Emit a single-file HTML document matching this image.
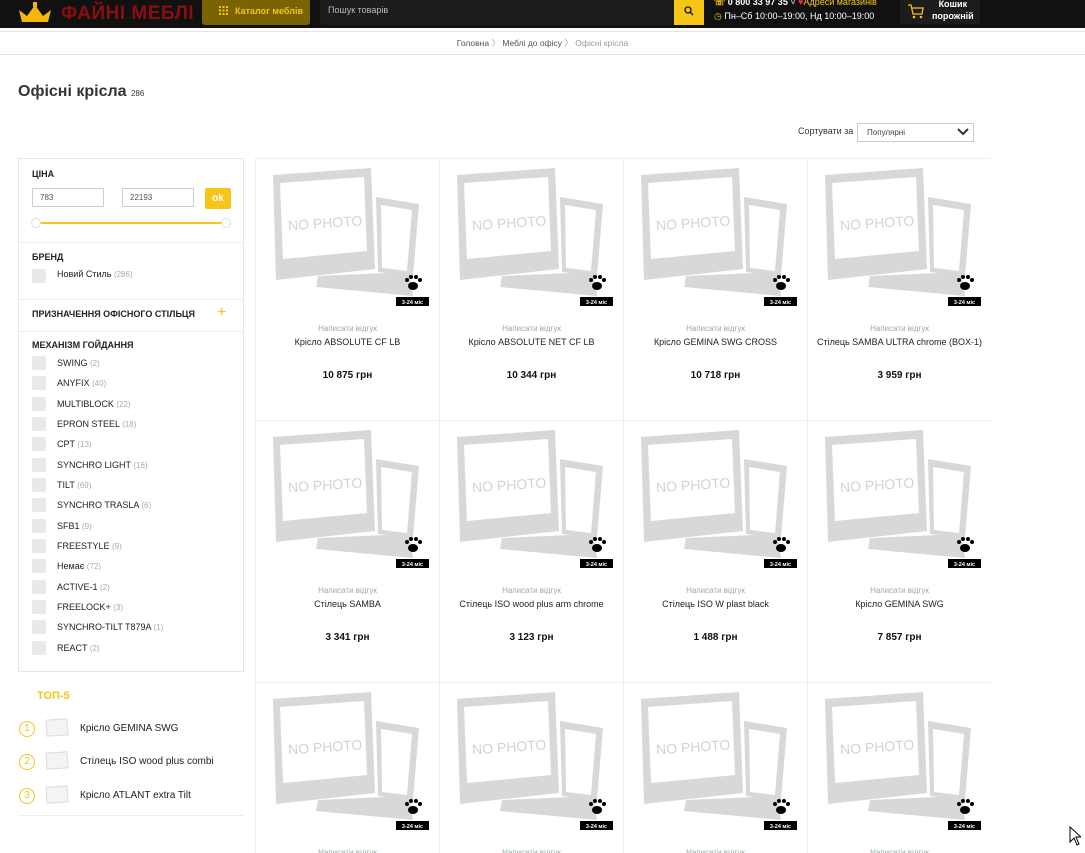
<!DOCTYPE html>
<html style="overflow:hidden;height:853px"><head><meta charset="utf-8"><style>
*{margin:0;padding:0;box-sizing:border-box}
body{width:1085px;height:853px;overflow:hidden;background:#fff;font-family:"Liberation Sans",sans-serif;color:#222;position:relative}
.a{position:absolute}
.hdr{left:0;top:0;width:1085px;height:28px;background:#111}
.card{position:absolute;width:184px;height:262px;border-right:1px solid #eee;border-bottom:1px solid #eee}
.card svg{position:absolute;left:0;top:0}
.rv{position:absolute;top:165px;width:100%;text-align:center;font-size:8px;color:#9aa}
.nm{position:absolute;top:178px;width:100%;text-align:center;font-size:9px;color:#222}
.pr{position:absolute;top:211px;width:100%;text-align:center;font-size:10px;font-weight:bold;color:#111}
.cb{position:absolute;left:13px;width:14px;height:14px;background:#e9e9eb;border-radius:2px}
.cl{position:absolute;left:38px;font-size:9px;color:#222}
.cl span{color:#aaa;font-size:8px}
.sh{position:absolute;left:13px;font-size:9px;font-weight:bold;color:#222}
.sep{position:absolute;left:0;width:226px;height:1px;background:#eee}
</style></head><body>
<div class="a hdr"></div>
<svg class="a" style="left:17px;top:2px" width="36" height="24" viewBox="0 0 36 24"><path d="M2 8 L10 14 L18 3 L26 14 L34 8 L31 20 L5 20 Z" fill="#f5b80a"/><rect x="16" y="0" width="4" height="5" fill="#f5b80a"/></svg>
<div class="a" style="left:61px;top:3px;font-size:19px;font-weight:bold;color:#8b0d12;letter-spacing:0.5px">ФАЙНІ МЕБЛІ</div>
<div class="a" style="left:202px;top:0;width:108px;height:25px;background:#7a6303;border-radius:0 0 3px 3px;color:#f5c518;font-size:9px;font-weight:bold;line-height:22px;padding-left:33px">Каталог меблів</div>
<svg class="a" style="left:219px;top:6px" width="9" height="9"><g fill="#f5c518"><rect x="0" y="0" width="2" height="2"/><rect x="3.5" y="0" width="2" height="2"/><rect x="7" y="0" width="2" height="2"/><rect x="0" y="3.5" width="2" height="2"/><rect x="3.5" y="3.5" width="2" height="2"/><rect x="7" y="3.5" width="2" height="2"/><rect x="0" y="7" width="2" height="2"/><rect x="3.5" y="7" width="2" height="2"/><rect x="7" y="7" width="2" height="2"/></g></svg>
<div class="a" style="left:320px;top:0;width:355px;height:25px;background:#1c1c1c;border-radius:0 0 0 3px;color:#bbb;font-size:9px;line-height:21px;padding-left:8px">Пошук товарів</div>
<div class="a" style="left:674px;top:0;width:30px;height:25px;background:#f5c518"></div>
<svg class="a" style="left:684px;top:6px" width="10" height="10"><circle cx="4" cy="4" r="3" fill="none" stroke="#111" stroke-width="1.3"/><line x1="6" y1="6" x2="9" y2="9" stroke="#111" stroke-width="1.3"/></svg>
<div class="a" style="left:714px;top:-3px;font-size:9px;color:#fff;font-weight:bold"><span style="color:#f5c518">☏</span> 0 800 33 97 35 <span style="color:#aaa">˅</span> <span style="color:#e33">♥</span><span style="color:#f5c518;font-weight:normal">Адреси магазинів</span></div>
<div class="a" style="left:714px;top:11px;font-size:9px;color:#fff"><span style="color:#f5c518">◷</span> Пн–Сб 10:00–19:00, Нд 10:00–19:00</div>
<div class="a" style="left:900px;top:0;width:80px;height:24px;background:#1c1c1c;border-radius:0 0 3px 3px"></div>
<svg class="a" style="left:907px;top:3px" width="18" height="16"><path d="M1 2 H4 L6 11 H15 L16 5 H5" fill="none" stroke="#f5c518" stroke-width="1.3"/><circle cx="7" cy="14" r="1.3" fill="#f5c518"/><circle cx="14" cy="14" r="1.3" fill="#f5c518"/></svg>
<div class="a" style="left:932px;top:-2px;font-size:9px;color:#fff;font-weight:bold;text-align:center;line-height:12px">Кошик<br>порожній</div>
<div class="a" style="left:0;top:31px;width:1085px;height:1px;background:#e4e4e0"></div>
<div class="a" style="left:0;top:37px;width:1085px;text-align:center;font-size:8.5px;color:#555">Головна <span style="color:#999">〉</span> Меблі до офісу <span style="color:#999">〉</span> <span style="color:#999">Офісні крісла</span></div>
<div class="a" style="left:0;top:54px;width:1085px;height:1px;background:#e4e4e0"></div>
<div class="a" style="left:18px;top:83px;font-size:16px;font-weight:bold;color:#333">Офісні крісла <span style="font-size:8px;font-weight:normal;color:#333">286</span></div>
<div class="a" style="left:798px;top:126px;font-size:9px;color:#333">Сортувати за</div>
<div class="a" style="left:857px;top:123px;width:117px;height:19px;border:1px solid #ccc;font-size:8px;color:#444;line-height:17px;padding-left:9px">Популярні</div>
<svg class="a" style="left:957px;top:128px" width="12" height="8"><path d="M1 1 L6 6 L11 1" fill="none" stroke="#333" stroke-width="2"/></svg>

<div class="a" style="left:18px;top:158px;width:226px;height:514px;border:1px solid #e6e6e6">
<div class="sh" style="top:10px">ЦІНА</div>
<div class="a" style="left:13px;top:29px;width:72px;height:19px;border:1px solid #ccd;font-size:8px;color:#555;line-height:17px;padding-left:7px">783</div>
<div class="a" style="left:103px;top:29px;width:72px;height:19px;border:1px solid #ccd;font-size:8px;color:#555;line-height:17px;padding-left:7px">22193</div>
<div class="a" style="left:186px;top:29px;width:26px;height:21px;background:#f5c518;border-radius:2px;color:#fff;font-size:10px;font-weight:bold;text-align:center;line-height:21px">ok</div>
<div class="a" style="left:18px;top:63px;width:190px;height:2px;background:#f5c518"></div>
<div class="a" style="left:12px;top:59px;width:10px;height:10px;border-radius:50%;background:#fff;border:1px solid #ddd"></div>
<div class="a" style="left:202px;top:59px;width:10px;height:10px;border-radius:50%;background:#fff;border:1px solid #ddd"></div>
<div class="sep" style="top:83px"></div>
<div class="sh" style="top:93px">БРЕНД</div>
<div class="cb" style="top:110px"></div><div class="cl" style="top:110px">Новий Стиль <span>(286)</span></div>
<div class="sep" style="top:140px"></div>
<div class="sh" style="top:150px">ПРИЗНАЧЕННЯ ОФІСНОГО СТІЛЬЦЯ</div>
<div class="a" style="left:198px;top:145px;font-size:16px;color:#f5c518">+</div>
<div class="sep" style="top:172px"></div>
<div class="sh" style="top:181px">МЕХАНІЗМ ГОЙДАННЯ</div>
<div class="cb" style="top:197px"></div><div class="cl" style="top:199px">SWING <span>(2)</span></div>
<div class="cb" style="top:217px"></div><div class="cl" style="top:219px">ANYFIX <span>(40)</span></div>
<div class="cb" style="top:238px"></div><div class="cl" style="top:240px">MULTIBLOCK <span>(22)</span></div>
<div class="cb" style="top:258px"></div><div class="cl" style="top:260px">EPRON STEEL <span>(18)</span></div>
<div class="cb" style="top:278px"></div><div class="cl" style="top:280px">CPT <span>(13)</span></div>
<div class="cb" style="top:299px"></div><div class="cl" style="top:301px">SYNCHRO LIGHT <span>(16)</span></div>
<div class="cb" style="top:319px"></div><div class="cl" style="top:321px">TILT <span>(69)</span></div>
<div class="cb" style="top:339px"></div><div class="cl" style="top:341px">SYNCHRO TRASLA <span>(6)</span></div>
<div class="cb" style="top:360px"></div><div class="cl" style="top:362px">SFB1 <span>(9)</span></div>
<div class="cb" style="top:380px"></div><div class="cl" style="top:382px">FREESTYLE <span>(9)</span></div>
<div class="cb" style="top:400px"></div><div class="cl" style="top:402px">Немає <span>(72)</span></div>
<div class="cb" style="top:421px"></div><div class="cl" style="top:423px">ACTIVE-1 <span>(2)</span></div>
<div class="cb" style="top:441px"></div><div class="cl" style="top:443px">FREELOCK+ <span>(3)</span></div>
<div class="cb" style="top:461px"></div><div class="cl" style="top:463px">SYNCHRO-TILT T879A <span>(1)</span></div>
<div class="cb" style="top:482px"></div><div class="cl" style="top:484px">REACT <span>(2)</span></div>
</div>

<div class="a" style="left:37px;top:690px;font-size:11px;font-weight:bold;color:#f5c518">ТОП-5</div>
<div class="a" style="left:19px;top:721px;width:16px;height:16px;border:1.5px solid #f5c518;border-radius:50%;color:#f5c518;font-size:10px;text-align:center;line-height:13px">1</div>
<div class="a" style="left:46px;top:719px;width:22px;height:17px;border:1px solid #ddd;background:#f4f4f4;transform:rotate(-4deg)"></div>
<div class="a" style="left:80px;top:723px;font-size:10px">Крісло GEMINA SWG</div>
<div class="a" style="left:19px;top:754px;width:16px;height:16px;border:1.5px solid #f5c518;border-radius:50%;color:#f5c518;font-size:10px;text-align:center;line-height:13px">2</div>
<div class="a" style="left:46px;top:752px;width:22px;height:17px;border:1px solid #ddd;background:#f4f4f4;transform:rotate(-4deg)"></div>
<div class="a" style="left:80px;top:756px;font-size:10px">Стілець ISO wood plus combi</div>
<div class="a" style="left:19px;top:788px;width:16px;height:16px;border:1.5px solid #f5c518;border-radius:50%;color:#f5c518;font-size:10px;text-align:center;line-height:13px">3</div>
<div class="a" style="left:46px;top:786px;width:22px;height:17px;border:1px solid #ddd;background:#f4f4f4;transform:rotate(-4deg)"></div>
<div class="a" style="left:80px;top:790px;font-size:10px">Крісло ATLANT extra Tilt</div>
<div class="a" style="left:18px;top:815px;width:226px;height:1px;background:#eee"></div>

<div class="a" style="left:255px;top:158px;width:736px;height:695px;border-top:1px solid #eee;border-left:1px solid #eee;overflow:hidden">
<div class="card" style="left:0;top:0"><svg width="184" height="160"><path d="M17 16 L115 9 L119 110 L20 121 Z" fill="#d8d8d8"/><path d="M24 24 L108 18 L111 92 L27 100 Z" fill="#fff"/><text x="32" y="69" font-size="14" fill="#d3d3d3" font-family="Liberation Sans" transform="rotate(-4 68 64)">NO PHOTO</text><path d="M120 38 L163 45 L157 117 L122 113 Z" fill="#d8d8d8"/><path d="M125 46 L156 51 L151 112 L126 109 Z" fill="#fff"/><path d="M62 117 L153 113 L157 137 L60 128 Z" fill="#d8d8d8"/><g fill="#000"><ellipse cx="157" cy="127" rx="5" ry="4"/><circle cx="151" cy="121" r="2"/><circle cx="155" cy="118" r="2"/><circle cx="160" cy="118" r="2"/><circle cx="164" cy="121" r="2"/></g><rect x="140" y="138" width="33" height="9" fill="#000"/><text x="156.5" y="145" font-size="5.5" fill="#fff" text-anchor="middle" font-family="Liberation Sans" font-weight="bold">3-24 міс</text></svg><div class="rv">Написати відгук</div><div class="nm">Крісло ABSOLUTE CF LB</div><div class="pr">10 875 грн</div></div>
<div class="card" style="left:184px;top:0"><svg width="184" height="160"><path d="M17 16 L115 9 L119 110 L20 121 Z" fill="#d8d8d8"/><path d="M24 24 L108 18 L111 92 L27 100 Z" fill="#fff"/><text x="32" y="69" font-size="14" fill="#d3d3d3" font-family="Liberation Sans" transform="rotate(-4 68 64)">NO PHOTO</text><path d="M120 38 L163 45 L157 117 L122 113 Z" fill="#d8d8d8"/><path d="M125 46 L156 51 L151 112 L126 109 Z" fill="#fff"/><path d="M62 117 L153 113 L157 137 L60 128 Z" fill="#d8d8d8"/><g fill="#000"><ellipse cx="157" cy="127" rx="5" ry="4"/><circle cx="151" cy="121" r="2"/><circle cx="155" cy="118" r="2"/><circle cx="160" cy="118" r="2"/><circle cx="164" cy="121" r="2"/></g><rect x="140" y="138" width="33" height="9" fill="#000"/><text x="156.5" y="145" font-size="5.5" fill="#fff" text-anchor="middle" font-family="Liberation Sans" font-weight="bold">3-24 міс</text></svg><div class="rv">Написати відгук</div><div class="nm">Крісло ABSOLUTE NET CF LB</div><div class="pr">10 344 грн</div></div>
<div class="card" style="left:368px;top:0"><svg width="184" height="160"><path d="M17 16 L115 9 L119 110 L20 121 Z" fill="#d8d8d8"/><path d="M24 24 L108 18 L111 92 L27 100 Z" fill="#fff"/><text x="32" y="69" font-size="14" fill="#d3d3d3" font-family="Liberation Sans" transform="rotate(-4 68 64)">NO PHOTO</text><path d="M120 38 L163 45 L157 117 L122 113 Z" fill="#d8d8d8"/><path d="M125 46 L156 51 L151 112 L126 109 Z" fill="#fff"/><path d="M62 117 L153 113 L157 137 L60 128 Z" fill="#d8d8d8"/><g fill="#000"><ellipse cx="157" cy="127" rx="5" ry="4"/><circle cx="151" cy="121" r="2"/><circle cx="155" cy="118" r="2"/><circle cx="160" cy="118" r="2"/><circle cx="164" cy="121" r="2"/></g><rect x="140" y="138" width="33" height="9" fill="#000"/><text x="156.5" y="145" font-size="5.5" fill="#fff" text-anchor="middle" font-family="Liberation Sans" font-weight="bold">3-24 міс</text></svg><div class="rv">Написати відгук</div><div class="nm">Крісло GEMINA SWG CROSS</div><div class="pr">10 718 грн</div></div>
<div class="card" style="left:552px;top:0"><svg width="184" height="160"><path d="M17 16 L115 9 L119 110 L20 121 Z" fill="#d8d8d8"/><path d="M24 24 L108 18 L111 92 L27 100 Z" fill="#fff"/><text x="32" y="69" font-size="14" fill="#d3d3d3" font-family="Liberation Sans" transform="rotate(-4 68 64)">NO PHOTO</text><path d="M120 38 L163 45 L157 117 L122 113 Z" fill="#d8d8d8"/><path d="M125 46 L156 51 L151 112 L126 109 Z" fill="#fff"/><path d="M62 117 L153 113 L157 137 L60 128 Z" fill="#d8d8d8"/><g fill="#000"><ellipse cx="157" cy="127" rx="5" ry="4"/><circle cx="151" cy="121" r="2"/><circle cx="155" cy="118" r="2"/><circle cx="160" cy="118" r="2"/><circle cx="164" cy="121" r="2"/></g><rect x="140" y="138" width="33" height="9" fill="#000"/><text x="156.5" y="145" font-size="5.5" fill="#fff" text-anchor="middle" font-family="Liberation Sans" font-weight="bold">3-24 міс</text></svg><div class="rv">Написати відгук</div><div class="nm">Стілець SAMBA ULTRA chrome (BOX-1)</div><div class="pr">3 959 грн</div></div>

<div class="card" style="left:0;top:262px"><svg width="184" height="160"><path d="M17 16 L115 9 L119 110 L20 121 Z" fill="#d8d8d8"/><path d="M24 24 L108 18 L111 92 L27 100 Z" fill="#fff"/><text x="32" y="69" font-size="14" fill="#d3d3d3" font-family="Liberation Sans" transform="rotate(-4 68 64)">NO PHOTO</text><path d="M120 38 L163 45 L157 117 L122 113 Z" fill="#d8d8d8"/><path d="M125 46 L156 51 L151 112 L126 109 Z" fill="#fff"/><path d="M62 117 L153 113 L157 137 L60 128 Z" fill="#d8d8d8"/><g fill="#000"><ellipse cx="157" cy="127" rx="5" ry="4"/><circle cx="151" cy="121" r="2"/><circle cx="155" cy="118" r="2"/><circle cx="160" cy="118" r="2"/><circle cx="164" cy="121" r="2"/></g><rect x="140" y="138" width="33" height="9" fill="#000"/><text x="156.5" y="145" font-size="5.5" fill="#fff" text-anchor="middle" font-family="Liberation Sans" font-weight="bold">3-24 міс</text></svg><div class="rv">Написати відгук</div><div class="nm">Стілець SAMBA</div><div class="pr">3 341 грн</div></div>
<div class="card" style="left:184px;top:262px"><svg width="184" height="160"><path d="M17 16 L115 9 L119 110 L20 121 Z" fill="#d8d8d8"/><path d="M24 24 L108 18 L111 92 L27 100 Z" fill="#fff"/><text x="32" y="69" font-size="14" fill="#d3d3d3" font-family="Liberation Sans" transform="rotate(-4 68 64)">NO PHOTO</text><path d="M120 38 L163 45 L157 117 L122 113 Z" fill="#d8d8d8"/><path d="M125 46 L156 51 L151 112 L126 109 Z" fill="#fff"/><path d="M62 117 L153 113 L157 137 L60 128 Z" fill="#d8d8d8"/><g fill="#000"><ellipse cx="157" cy="127" rx="5" ry="4"/><circle cx="151" cy="121" r="2"/><circle cx="155" cy="118" r="2"/><circle cx="160" cy="118" r="2"/><circle cx="164" cy="121" r="2"/></g><rect x="140" y="138" width="33" height="9" fill="#000"/><text x="156.5" y="145" font-size="5.5" fill="#fff" text-anchor="middle" font-family="Liberation Sans" font-weight="bold">3-24 міс</text></svg><div class="rv">Написати відгук</div><div class="nm">Стілець ISO wood plus arm chrome</div><div class="pr">3 123 грн</div></div>
<div class="card" style="left:368px;top:262px"><svg width="184" height="160"><path d="M17 16 L115 9 L119 110 L20 121 Z" fill="#d8d8d8"/><path d="M24 24 L108 18 L111 92 L27 100 Z" fill="#fff"/><text x="32" y="69" font-size="14" fill="#d3d3d3" font-family="Liberation Sans" transform="rotate(-4 68 64)">NO PHOTO</text><path d="M120 38 L163 45 L157 117 L122 113 Z" fill="#d8d8d8"/><path d="M125 46 L156 51 L151 112 L126 109 Z" fill="#fff"/><path d="M62 117 L153 113 L157 137 L60 128 Z" fill="#d8d8d8"/><g fill="#000"><ellipse cx="157" cy="127" rx="5" ry="4"/><circle cx="151" cy="121" r="2"/><circle cx="155" cy="118" r="2"/><circle cx="160" cy="118" r="2"/><circle cx="164" cy="121" r="2"/></g><rect x="140" y="138" width="33" height="9" fill="#000"/><text x="156.5" y="145" font-size="5.5" fill="#fff" text-anchor="middle" font-family="Liberation Sans" font-weight="bold">3-24 міс</text></svg><div class="rv">Написати відгук</div><div class="nm">Стілець ISO W plast black</div><div class="pr">1 488 грн</div></div>
<div class="card" style="left:552px;top:262px"><svg width="184" height="160"><path d="M17 16 L115 9 L119 110 L20 121 Z" fill="#d8d8d8"/><path d="M24 24 L108 18 L111 92 L27 100 Z" fill="#fff"/><text x="32" y="69" font-size="14" fill="#d3d3d3" font-family="Liberation Sans" transform="rotate(-4 68 64)">NO PHOTO</text><path d="M120 38 L163 45 L157 117 L122 113 Z" fill="#d8d8d8"/><path d="M125 46 L156 51 L151 112 L126 109 Z" fill="#fff"/><path d="M62 117 L153 113 L157 137 L60 128 Z" fill="#d8d8d8"/><g fill="#000"><ellipse cx="157" cy="127" rx="5" ry="4"/><circle cx="151" cy="121" r="2"/><circle cx="155" cy="118" r="2"/><circle cx="160" cy="118" r="2"/><circle cx="164" cy="121" r="2"/></g><rect x="140" y="138" width="33" height="9" fill="#000"/><text x="156.5" y="145" font-size="5.5" fill="#fff" text-anchor="middle" font-family="Liberation Sans" font-weight="bold">3-24 міс</text></svg><div class="rv">Написати відгук</div><div class="nm">Крісло GEMINA SWG</div><div class="pr">7 857 грн</div></div>

<div class="card" style="left:0;top:524px"><svg width="184" height="160"><path d="M17 16 L115 9 L119 110 L20 121 Z" fill="#d8d8d8"/><path d="M24 24 L108 18 L111 92 L27 100 Z" fill="#fff"/><text x="32" y="69" font-size="14" fill="#d3d3d3" font-family="Liberation Sans" transform="rotate(-4 68 64)">NO PHOTO</text><path d="M120 38 L163 45 L157 117 L122 113 Z" fill="#d8d8d8"/><path d="M125 46 L156 51 L151 112 L126 109 Z" fill="#fff"/><path d="M62 117 L153 113 L157 137 L60 128 Z" fill="#d8d8d8"/><g fill="#000"><ellipse cx="157" cy="127" rx="5" ry="4"/><circle cx="151" cy="121" r="2"/><circle cx="155" cy="118" r="2"/><circle cx="160" cy="118" r="2"/><circle cx="164" cy="121" r="2"/></g><rect x="140" y="138" width="33" height="9" fill="#000"/><text x="156.5" y="145" font-size="5.5" fill="#fff" text-anchor="middle" font-family="Liberation Sans" font-weight="bold">3-24 міс</text></svg><div class="rv">Написати відгук</div></div>
<div class="card" style="left:184px;top:524px"><svg width="184" height="160"><path d="M17 16 L115 9 L119 110 L20 121 Z" fill="#d8d8d8"/><path d="M24 24 L108 18 L111 92 L27 100 Z" fill="#fff"/><text x="32" y="69" font-size="14" fill="#d3d3d3" font-family="Liberation Sans" transform="rotate(-4 68 64)">NO PHOTO</text><path d="M120 38 L163 45 L157 117 L122 113 Z" fill="#d8d8d8"/><path d="M125 46 L156 51 L151 112 L126 109 Z" fill="#fff"/><path d="M62 117 L153 113 L157 137 L60 128 Z" fill="#d8d8d8"/><g fill="#000"><ellipse cx="157" cy="127" rx="5" ry="4"/><circle cx="151" cy="121" r="2"/><circle cx="155" cy="118" r="2"/><circle cx="160" cy="118" r="2"/><circle cx="164" cy="121" r="2"/></g><rect x="140" y="138" width="33" height="9" fill="#000"/><text x="156.5" y="145" font-size="5.5" fill="#fff" text-anchor="middle" font-family="Liberation Sans" font-weight="bold">3-24 міс</text></svg><div class="rv">Написати відгук</div></div>
<div class="card" style="left:368px;top:524px"><svg width="184" height="160"><path d="M17 16 L115 9 L119 110 L20 121 Z" fill="#d8d8d8"/><path d="M24 24 L108 18 L111 92 L27 100 Z" fill="#fff"/><text x="32" y="69" font-size="14" fill="#d3d3d3" font-family="Liberation Sans" transform="rotate(-4 68 64)">NO PHOTO</text><path d="M120 38 L163 45 L157 117 L122 113 Z" fill="#d8d8d8"/><path d="M125 46 L156 51 L151 112 L126 109 Z" fill="#fff"/><path d="M62 117 L153 113 L157 137 L60 128 Z" fill="#d8d8d8"/><g fill="#000"><ellipse cx="157" cy="127" rx="5" ry="4"/><circle cx="151" cy="121" r="2"/><circle cx="155" cy="118" r="2"/><circle cx="160" cy="118" r="2"/><circle cx="164" cy="121" r="2"/></g><rect x="140" y="138" width="33" height="9" fill="#000"/><text x="156.5" y="145" font-size="5.5" fill="#fff" text-anchor="middle" font-family="Liberation Sans" font-weight="bold">3-24 міс</text></svg><div class="rv">Написати відгук</div></div>
<div class="card" style="left:552px;top:524px"><svg width="184" height="160"><path d="M17 16 L115 9 L119 110 L20 121 Z" fill="#d8d8d8"/><path d="M24 24 L108 18 L111 92 L27 100 Z" fill="#fff"/><text x="32" y="69" font-size="14" fill="#d3d3d3" font-family="Liberation Sans" transform="rotate(-4 68 64)">NO PHOTO</text><path d="M120 38 L163 45 L157 117 L122 113 Z" fill="#d8d8d8"/><path d="M125 46 L156 51 L151 112 L126 109 Z" fill="#fff"/><path d="M62 117 L153 113 L157 137 L60 128 Z" fill="#d8d8d8"/><g fill="#000"><ellipse cx="157" cy="127" rx="5" ry="4"/><circle cx="151" cy="121" r="2"/><circle cx="155" cy="118" r="2"/><circle cx="160" cy="118" r="2"/><circle cx="164" cy="121" r="2"/></g><rect x="140" y="138" width="33" height="9" fill="#000"/><text x="156.5" y="145" font-size="5.5" fill="#fff" text-anchor="middle" font-family="Liberation Sans" font-weight="bold">3-24 міс</text></svg><div class="rv">Написати відгук</div></div>
</div>
<svg class="a" style="left:1069px;top:826px" width="12" height="20"><path d="M1 1 L1 16 L5 12 L8 19 L10 18 L7 11 L12 11 Z" fill="#fff" stroke="#000" stroke-width="1"/></svg>
</body></html>
